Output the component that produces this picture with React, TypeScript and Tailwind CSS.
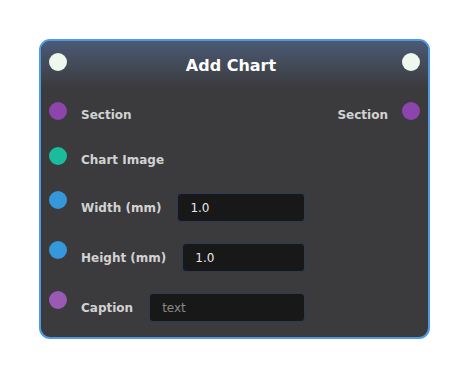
import React from "react";

const font = { fontFamily: '"DejaVu Sans", Verdana, sans-serif' };

const Dot = ({ color }: { color: string }) => (
  <span className={`block w-[18px] h-[18px] rounded-full shrink-0 ${color}`} />
);

const InputRow = ({
  dot,
  label,
  value,
  placeholder,
}: {
  dot: string;
  label: string;
  value?: string;
  placeholder?: string;
}) => (
  <div className="flex items-start h-[50px] shrink-0">
    <Dot color={dot} />
    <div className="flex items-center ml-[14px] w-[224px]">
      <span className="text-[12px] font-bold text-[#d2d2d2] mt-[2px] leading-[30px] whitespace-nowrap">
        {label}
      </span>
      <input
        readOnly
        value={value ?? ""}
        placeholder={placeholder}
        style={font}
        className="ml-[16px] mt-[1px] flex-1 min-w-0 h-[29px] rounded-[4px] bg-[#181818] border border-[#2c3c55] px-[12px] text-[12px] text-[#e8e8e8] placeholder:text-[#8a8a8a] outline-none"
      />
    </div>
  </div>
);

export default function App() {
  return (
    <div className="w-[469px] h-[378px] bg-white pt-[39px] pl-[39px]" style={font}>
      <div className="w-[391px] h-[300px] rounded-[11px] border-2 border-[#4d9be8] bg-[#3b3b3d] overflow-hidden flex flex-col">
        <div className="h-[47px] shrink-0 flex items-start px-[8px] pt-[12px] bg-gradient-to-b from-[#4b5a76] to-[#3b3b3d]">
          <Dot color="bg-[#eef8ec]" />
          <div className="flex-1 text-center text-white font-bold text-[16px] leading-[20px] mt-[3px] pr-[7px]">
            Add Chart
          </div>
          <Dot color="bg-[#eef8ec]" />
        </div>
        <div className="flex flex-col px-[8px] pt-[14px]">
          <div className="flex items-start h-[45px] shrink-0">
            <Dot color="bg-[#8e44ad]" />
            <span className="ml-[14px] mt-[4px] text-[12px] font-bold text-[#d2d2d2] leading-[18px]">
              Section
            </span>
            <span className="ml-auto mr-[14px] mt-[4px] text-[12px] font-bold text-[#d2d2d2] leading-[18px]">
              Section
            </span>
            <Dot color="bg-[#8e44ad]" />
          </div>
          <div className="flex items-start h-[44px] shrink-0">
            <Dot color="bg-[#1abc9c]" />
            <span className="ml-[14px] mt-[4px] text-[12px] font-bold text-[#d2d2d2] leading-[18px]">
              Chart Image
            </span>
          </div>
          <InputRow dot="bg-[#3498db]" label="Width (mm)" value="1.0" />
          <InputRow dot="bg-[#3498db]" label="Height (mm)" value="1.0" />
          <InputRow dot="bg-[#9b59b6]" label="Caption" placeholder="text" />
        </div>
      </div>
    </div>
  );
}
